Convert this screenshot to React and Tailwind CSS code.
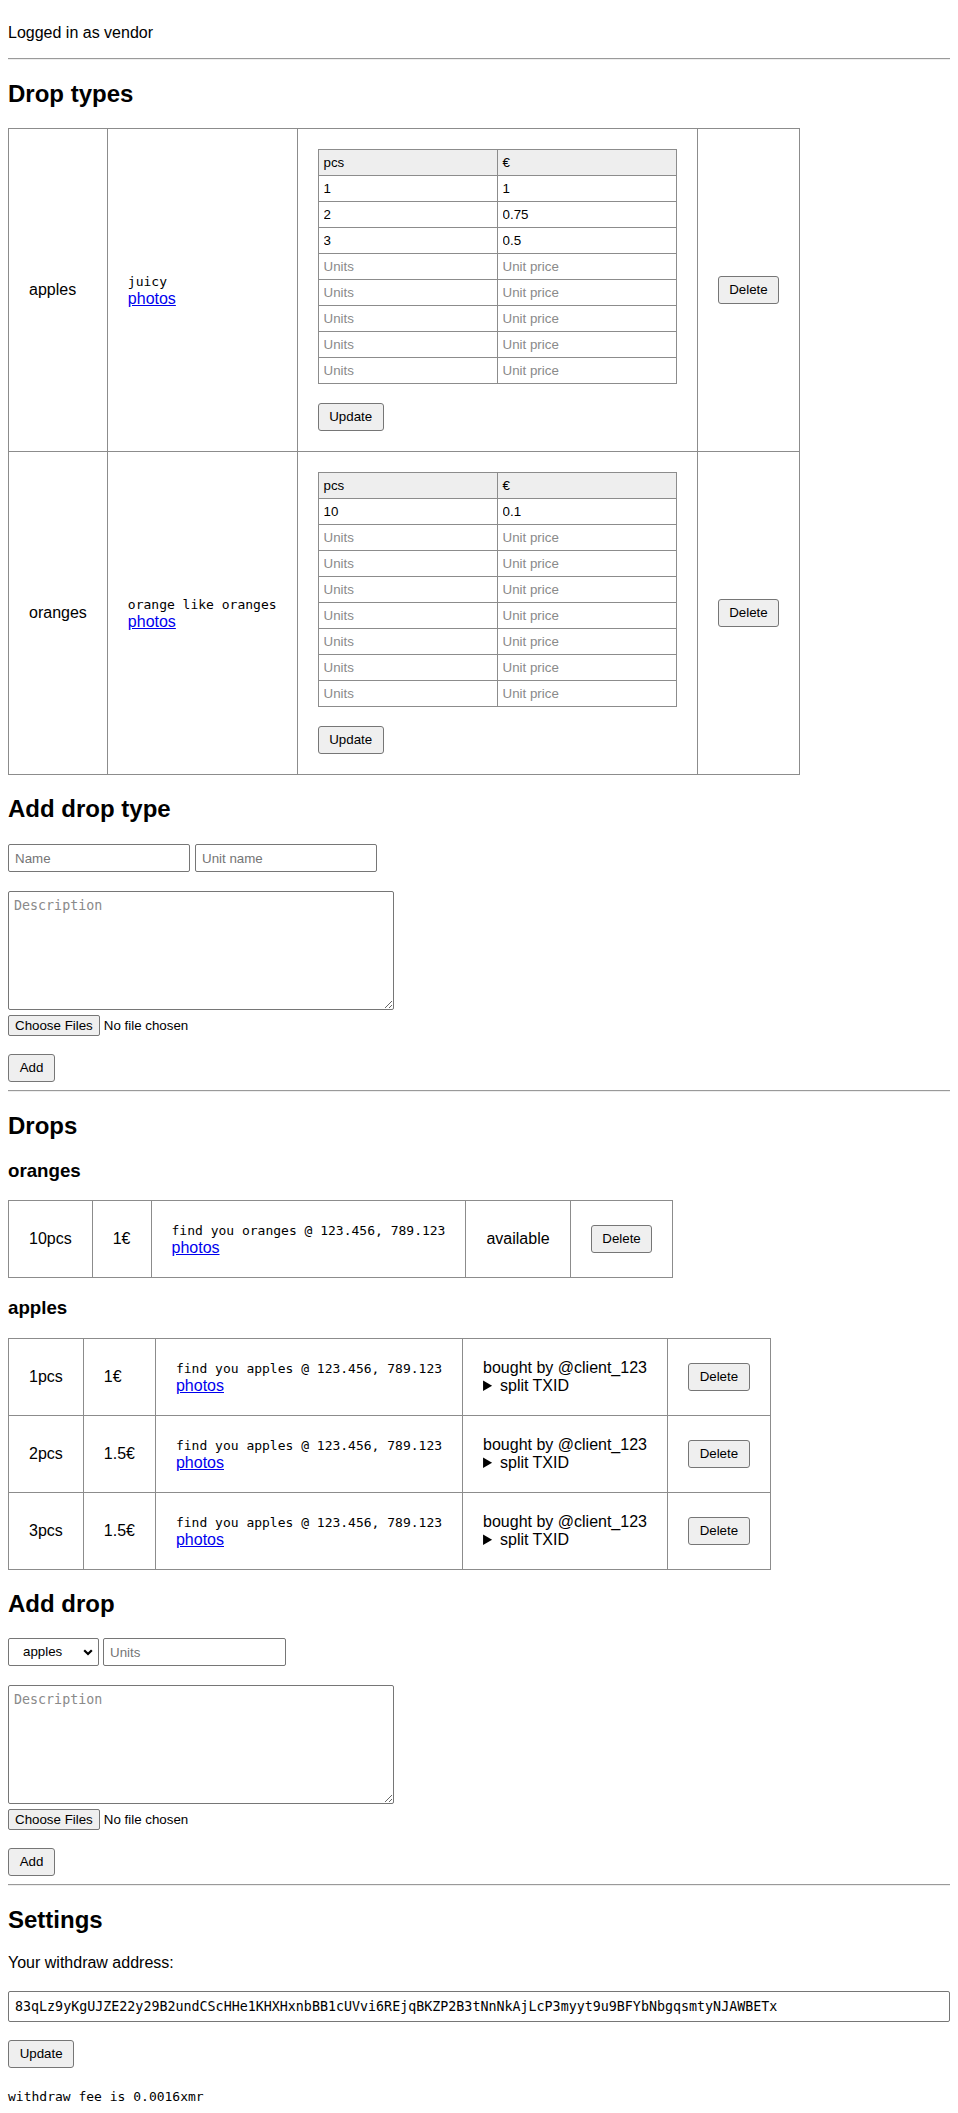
import React from 'react';

const sans = "font-['Liberation_Sans',Arial,sans-serif]";
const mono = "font-['DejaVu_Sans_Mono',monospace]";

const dropTypes = [
  { name: 'apples', description: 'juicy', prices: [['1', '1'], ['2', '0.75'], ['3', '0.5']] },
  { name: 'oranges', description: 'orange like oranges', prices: [['10', '0.1']] },
];

const orangeDrops = [{ units: '10pcs', price: '1€', note: 'find you oranges @ 123.456, 789.123', status: 'available' }];

const appleDrops = [
  { units: '1pcs', price: '1€', note: 'find you apples @ 123.456, 789.123' },
  { units: '2pcs', price: '1.5€', note: 'find you apples @ 123.456, 789.123' },
  { units: '3pcs', price: '1.5€', note: 'find you apples @ 123.456, 789.123' },
];

const ADDRESS = '83qLz9yKgUJZE22y29B2undCScHHe1KHXHxnbBB1cUVvi6REjqBKZP2B3tNnNkAjLcP3myyt9u9BFYbNbgqsmtyNJAWBETx';

const td = 'border border-[#8c8c8c] p-5 align-middle text-left';
const btn = `h-[28px] px-[10.67px] text-[13.33px] leading-none text-black bg-[#efefef] border border-[#767676] rounded-[3px] ${sans}`;
const field = `h-[28px] px-[6px] text-[13.33px] text-black bg-white border border-[#767676] rounded-[2px] placeholder:text-[#757575] ${sans}`;

const Rule = ({ className = '' }) => (
  <hr className={`h-0 border-t border-b border-t-[#9a9a9a] border-b-[#eeeeee] ${className}`} />
);

const Button = ({ children }) => (
  <div className="flex">
    <button type="button" className={btn}>{children}</button>
  </div>
);

const Photos = () => (
  <a href="#" className="text-[#0000ee] underline">photos</a>
);

// monospace note + photos link, two 18px lines
const Note = ({ text }) => (
  <>
    <div className="h-[18px] flex items-center">
      <code className={`text-[13px] leading-[13px] ${mono}`}>{text}</code>
    </div>
    <div className="h-[18px]"><Photos /></div>
  </>
);

const PriceTable = ({ prices }) => {
  const empty = 8 - prices.length;
  const cell = 'border border-[#8c8c8c] p-0 h-[26px]';
  const input = `block w-[178px] h-[25px] px-[5px] text-[13.33px] text-black bg-transparent outline-none placeholder:text-[#8a8a8a] ${sans}`;
  return (
    <table className="border-collapse">
      <thead>
        <tr className="bg-[#eeeeee]">
          <th className={`${cell} font-normal text-left px-[5px] text-[13.33px]`}>pcs</th>
          <th className={`${cell} font-normal text-left px-[5px] text-[13.33px]`}>€</th>
        </tr>
      </thead>
      <tbody>
        {prices.map(([u, p], i) => (
          <tr key={i}>
            <td className={cell}><input className={input} defaultValue={u} /></td>
            <td className={cell}><input className={input} defaultValue={p} /></td>
          </tr>
        ))}
        {Array.from({ length: empty }).map((_, i) => (
          <tr key={`e${i}`}>
            <td className={cell}><input className={input} placeholder="Units" /></td>
            <td className={cell}><input className={input} placeholder="Unit price" /></td>
          </tr>
        ))}
      </tbody>
    </table>
  );
};

const FileRow = () => (
  <div className="mt-[5px] flex">
    <input
      type="file"
      multiple
      className={`h-[21px] text-[13.33px] text-black ${sans} file:h-[21px] file:px-[6px] file:mr-[4px] file:bg-[#efefef] file:border file:border-[#767676] file:rounded-[2px] file:text-black`}
    />
  </div>
);

const Description = () => (
  <textarea
    placeholder="Description"
    className={`mt-[19px] block w-[386px] h-[119px] px-[5px] py-[6px] text-[13.33px] leading-[16px] bg-white border border-[#767676] rounded-[2px] placeholder:text-[#8a8a8a] ${mono}`}
  />
);

export default function App() {
  return (
    <div className={`px-2 pt-6 pb-4 bg-white text-black text-base leading-[18px] ${sans}`}>
      <p className="h-[18px]">Logged in as vendor</p>
      <Rule className="mt-4" />

      <h2 className="mt-5 h-[28px] text-2xl leading-[28px] font-bold">Drop types</h2>
      <table className="mt-5 border-collapse">
        <tbody>
          {dropTypes.map((t) => (
            <tr key={t.name}>
              <td className={td}>{t.name}</td>
              <td className={td}><Note text={t.description} /></td>
              <td className={td}>
                <PriceTable prices={t.prices} />
                <div className="mt-[19px]"><Button>Update</Button></div>
              </td>
              <td className={td}><Button>Delete</Button></td>
            </tr>
          ))}
        </tbody>
      </table>

      <h2 className="mt-5 h-[28px] text-2xl leading-[28px] font-bold">Add drop type</h2>
      <div className="mt-[21px] flex gap-[5px]">
        <input placeholder="Name" className={`w-[182px] ${field}`} />
        <input placeholder="Unit name" className={`w-[182px] ${field}`} />
      </div>
      <Description />
      <FileRow />
      <div className="mt-[18px]"><Button>Add</Button></div>
      <Rule className="mt-2" />

      <h2 className="mt-5 h-[28px] text-2xl leading-[28px] font-bold">Drops</h2>
      <h3 className="mt-5 h-[22px] text-[18.72px] leading-[22px] font-bold">oranges</h3>
      <table className="mt-[18px] border-collapse">
        <tbody>
          {orangeDrops.map((d, i) => (
            <tr key={i}>
              <td className={td}>{d.units}</td>
              <td className={td}>{d.price}</td>
              <td className={td}><Note text={d.note} /></td>
              <td className={td}>{d.status}</td>
              <td className={td}><Button>Delete</Button></td>
            </tr>
          ))}
        </tbody>
      </table>

      <h3 className="mt-[19px] h-[22px] text-[18.72px] leading-[22px] font-bold">apples</h3>
      <table className="mt-[19px] border-collapse">
        <tbody>
          {appleDrops.map((d, i) => (
            <tr key={i}>
              <td className={td}>{d.units}</td>
              <td className={td}>{d.price}</td>
              <td className={td}><Note text={d.note} /></td>
              <td className={td}>
                <div className="h-[18px]">bought by @client_123</div>
                <details className="h-[18px] overflow-hidden">
                  <summary className="h-[18px] leading-[18px] cursor-pointer">split TXID</summary>
                </details>
              </td>
              <td className={td}><Button>Delete</Button></td>
            </tr>
          ))}
        </tbody>
      </table>

      <h2 className="mt-5 h-[28px] text-2xl leading-[28px] font-bold">Add drop</h2>
      <div className="mt-5 flex gap-[4px]">
        <div className="relative">
          <select className={`w-[91px] pl-[14px] appearance-none ${field}`} defaultValue="apples">
            <option value="apples">apples</option>
            <option value="oranges">oranges</option>
          </select>
          <svg className="pointer-events-none absolute right-[6px] top-[11px]" width="10" height="7" viewBox="0 0 10 7">
            <path d="M1.2 1.2 L5 5 L8.8 1.2" fill="none" stroke="#000" strokeWidth="2.2" />
          </svg>
        </div>
        <input placeholder="Units" className={`w-[183px] ${field}`} />
      </div>
      <Description />
      <FileRow />
      <div className="mt-[18px]"><Button>Add</Button></div>
      <Rule className="mt-2" />

      <h2 className="mt-5 h-[28px] text-2xl leading-[28px] font-bold">Settings</h2>
      <p className="mt-5 h-[18px]">Your withdraw address:</p>
      <input
        defaultValue={ADDRESS}
        className={`mt-[19px] block w-full h-[31px] px-[6px] text-[13.33px] text-black bg-white border border-[#767676] rounded-[2px] ${mono}`}
      />
      <div className="mt-[18px]"><Button>Update</Button></div>
      <pre className={`mt-[21px] text-[13px] leading-[15px] ${mono}`}>withdraw fee is 0.0016xmr</pre>
    </div>
  );
}
